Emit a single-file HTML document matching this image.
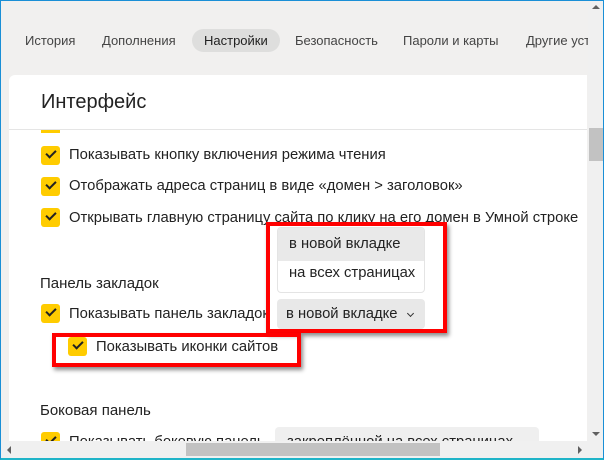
<!DOCTYPE html>
<html><head><meta charset="utf-8"><style>
*{margin:0;padding:0;box-sizing:border-box}
body{width:604px;height:460px;overflow:hidden;background:#f1f0ef;font-family:"Liberation Sans","Noto Sans CJK SC",sans-serif;color:#222;position:relative}
.a{position:absolute;white-space:nowrap}
.frame{position:absolute;left:0;top:0;width:604px;height:460px;border:1px solid #1a8fd6;border-bottom:2px solid #1fb4c8;pointer-events:none;z-index:20}
.tab{font-size:13px;color:#444;top:33px}
.card{position:absolute;left:9px;top:75px;width:578px;height:380px;background:#fff;border-radius:6px 0 0 0}
.cb{position:absolute;width:19px;height:19px;background:#ffcc00;border-radius:3px}
.cb:after{content:"";position:absolute;left:5px;top:4px;width:8px;height:4px;border-left:2px solid #222;border-bottom:2px solid #222;transform:rotate(-45deg)}
.t{font-size:14.8px;color:#222}
.red{position:absolute;border:4px solid #f00;box-shadow:2px 3px 4px rgba(0,0,0,.45)}
</style></head><body>
<div class="a tab" style="left:25px">История</div>
<div class="a tab" style="left:102px">Дополнения</div>
<div class="a" style="left:192px;top:29px;width:88px;height:23px;background:#dededd;border-radius:12px"></div>
<div class="a tab" style="left:204px;color:#222">Настройки</div>
<div class="a tab" style="left:295px">Безопасность</div>
<div class="a tab" style="left:403px">Пароли и карты</div>
<div class="a tab" style="left:526px">Другие устр</div>
<div class="a" style="left:588px;top:0;width:16px;height:75px;background:#f1f0ef;z-index:2"></div>
<div class="card"></div>
<div class="a" style="left:41px;top:91px;font-size:20px;color:#222">Интерфейс</div>
<div class="a" style="left:9px;top:129px;width:578px;height:1px;background:#e5e5e5"></div>
<div class="a" style="left:41px;top:130px;width:19px;height:3px;background:#ffcc00"></div>
<div class="cb" style="left:41px;top:146px"></div><div class="a t" style="left:69px;top:147px">Показывать кнопку включения режима чтения</div>
<div class="cb" style="left:41px;top:177px"></div><div class="a t" style="left:69px;top:178px">Отображать адреса страниц в виде «домен &gt; заголовок»</div>
<div class="cb" style="left:41px;top:208px"></div><div class="a t" style="left:69px;top:210px">Открывать главную страницу сайта по клику на его домен в Умной строке</div>
<div class="a" style="left:40px;top:275px;font-size:15px">Панель закладок</div>
<div class="cb" style="left:41px;top:304px"></div><div class="a t" style="left:69px;top:306px">Показывать панель закладок</div>
<div class="cb" style="left:68px;top:337px"></div><div class="a t" style="left:96px;top:339px">Показывать иконки сайтов</div>
<div class="a" style="left:40px;top:402px;font-size:15px">Боковая панель</div>
<div class="cb" style="left:41px;top:432px"></div><div class="a t" style="left:69px;top:434px">Показывать боковую панель</div>
<div class="a" style="left:275px;top:427px;width:264px;height:20px;background:#efefef;border-radius:4px"></div>
<div class="a t" style="left:287px;top:434px">закреплённой на всех страницах</div>
<!-- popup -->
<div class="a" style="left:270px;top:225px;width:175px;height:108px;background:#fff"></div>
<div class="a" style="left:277px;top:227px;width:148px;height:66px;background:#fff;border:1px solid #e4e4e4;border-radius:4px;overflow:hidden"><div style="height:33px;background:#e9e9e9"></div></div>
<div class="a t" style="left:289px;top:236px">в новой вкладке</div>
<div class="a t" style="left:289px;top:265px">на всех страницах</div>
<div class="a" style="left:277px;top:299px;width:148px;height:30px;background:#e8e8e8;border-radius:4px"></div>
<div class="a t" style="left:286px;top:306px">в новой вкладке</div>
<div class="a" style="left:408px;top:311px;width:5px;height:5px;border-right:1.5px solid #333;border-bottom:1.5px solid #333;transform:rotate(45deg)"></div>
<div class="red" style="left:266px;top:222px;width:181px;height:111px"></div>
<div class="red" style="left:52px;top:333px;width:249px;height:34px"></div>
<!-- scrollbars -->
<div class="a" style="left:588px;top:0;width:16px;height:441px;background:#f0f0f0;z-index:3"></div>
<div class="a" style="left:589px;top:128px;width:14px;height:33px;background:#c2c2c2;z-index:3"></div>
<div class="a" style="left:592px;top:5px;width:0;height:0;border-left:4px solid transparent;border-right:4px solid transparent;border-bottom:4px solid #606060;z-index:3"></div>
<div class="a" style="left:592px;top:432px;width:0;height:0;border-left:4px solid transparent;border-right:4px solid transparent;border-top:4px solid #606060;z-index:3"></div>
<div class="a" style="left:0;top:441px;width:604px;height:19px;background:#f0f0f0;z-index:3"></div>
<div class="a" style="left:186px;top:443px;width:254px;height:13px;background:#c2c2c2;z-index:3"></div>
<div class="a" style="left:7px;top:446px;width:0;height:0;border-top:4px solid transparent;border-bottom:4px solid transparent;border-right:4px solid #606060;z-index:3"></div>
<div class="a" style="left:578px;top:446px;width:0;height:0;border-top:4px solid transparent;border-bottom:4px solid transparent;border-left:4px solid #606060;z-index:3"></div>
<div class="frame"></div>
</body></html>
